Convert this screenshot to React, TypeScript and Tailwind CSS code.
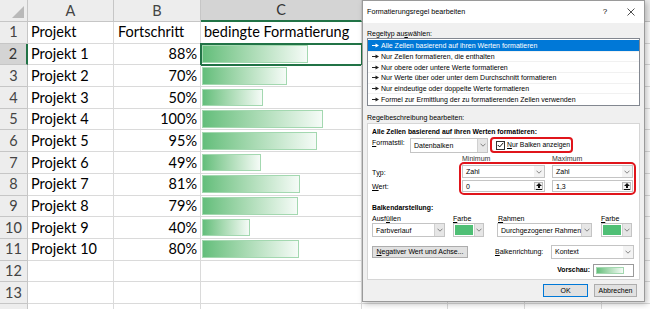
import React from "react";

const projects: [string, number][] = [
  ["Projekt 1", 88],
  ["Projekt 2", 70],
  ["Projekt 3", 50],
  ["Projekt 4", 100],
  ["Projekt 5", 95],
  ["Projekt 6", 49],
  ["Projekt 7", 81],
  ["Projekt 8", 79],
  ["Projekt 9", 40],
  ["Projekt 10", 80],
];

const ruleTypes = [
  "Alle Zellen basierend auf ihren Werten formatieren",
  "Nur Zellen formatieren, die enthalten",
  "Nur obere oder untere Werte formatieren",
  "Nur Werte über oder unter dem Durchschnitt formatieren",
  "Nur eindeutige oder doppelte Werte formatieren",
  "Formel zur Ermittlung der zu formatierenden Zellen verwenden",
];

// px per percent in column C (100% -> 121px)
const BAR_SCALE = 1.21;

function RowHead({ n, active }: { n?: number; active?: boolean }) {
  return (
    <div
      className={
        active
          ? "w-[28px] shrink-0 flex items-center justify-center bg-[#d4d4d4] text-[#333] border-b border-[#c6c6c6] border-r-2 border-r-[#217346]"
          : "w-[28px] shrink-0 flex items-center justify-center bg-[#ededed] text-[#444] border-b border-r border-[#c6c6c6]"
      }
    >
      {n}
    </div>
  );
}

function Sheet() {
  const empty = [12, 13, 0];
  return (
    <div className="w-[650px] h-[309px] overflow-hidden bg-white font-['Lato',sans-serif] text-[14.5px] text-black">
      {/* column headers */}
      <div className="flex h-[22px]">
        <div className="w-[28px] shrink-0 bg-[#ededed] border-r border-b border-[#c6c6c6] flex items-end justify-end p-[3px]">
          <svg width="12" height="12" viewBox="0 0 12 12">
            <polygon points="12,0 12,12 0,12" fill="#b9b9b9" />
          </svg>
        </div>
        <div className="w-[86px] shrink-0 bg-[#ededed] border-r border-b border-[#c6c6c6] flex items-center justify-center text-[#444]">A</div>
        <div className="w-[87px] shrink-0 bg-[#ededed] border-r border-b border-[#c6c6c6] flex items-center justify-center text-[#444]">B</div>
        <div className="w-[161px] shrink-0 bg-[#d4d4d4] border-r border-[#c6c6c6] border-b-2 border-b-[#217346] flex items-center justify-center text-[#333]">C</div>
        <div className="w-[86px] shrink-0 bg-[#ededed] border-r border-b border-[#c6c6c6]" />
        <div className="w-[77px] shrink-0 bg-[#ededed] border-r border-b border-[#c6c6c6]" />
        <div className="w-[77px] shrink-0 bg-[#ededed] border-r border-b border-[#c6c6c6]" />
        <div className="flex-1 bg-[#ededed] border-b border-[#c6c6c6]" />
      </div>

      {/* row 1 */}
      <div className="flex h-[21.7px]">
        <RowHead n={1} />
        <div className="w-[86px] shrink-0 border-r border-b border-[#dadada] flex items-center pl-[3px]">Projekt</div>
        <div className="w-[87px] shrink-0 border-r border-b border-[#dadada] flex items-center pl-[4px]">Fortschritt</div>
        <div className="w-[161px] shrink-0 border-r border-b border-[#dadada] flex items-center pl-[3px] whitespace-nowrap">bedingte Formatierung</div>
        <div className="flex-1 border-b border-[#dadada]" />
      </div>

      {projects.map(([name, pct], i) => (
        <div key={name} className="flex h-[21.7px]">
          <RowHead n={i + 2} active={i === 0} />
          <div className="w-[86px] shrink-0 border-r border-b border-[#dadada] flex items-center pl-[3px]">{name}</div>
          <div className="w-[87px] shrink-0 border-r border-b border-[#dadada] flex items-center justify-end pr-[3px]">{pct}%</div>
          <div
            className={
              i === 0
                ? "w-[161px] shrink-0 border-r border-b border-[#dadada] py-[1.5px] pl-[1px] outline-2 outline-[#217346] -outline-offset-1"
                : "w-[161px] shrink-0 border-r border-b border-[#dadada] py-[1.5px] pl-[1px]"
            }
          >
            <div
              className="h-full border border-[#a3d8b0] bg-gradient-to-r from-[#63be7b] to-[#f5fbf7]"
              style={{ width: pct * BAR_SCALE }}
            />
          </div>
          <div className="flex-1 border-b border-[#dadada]" />
        </div>
      ))}

      {empty.map((n) => (
        <div key={n} className="flex h-[21.7px]">
          <RowHead n={n || undefined} />
          <div className="w-[86px] shrink-0 border-r border-b border-[#dadada]" />
          <div className="w-[87px] shrink-0 border-r border-b border-[#dadada]" />
          <div className="w-[161px] shrink-0 border-r border-b border-[#dadada]" />
          <div className="w-[86px] shrink-0 border-r border-b border-[#dadada]" />
          <div className="w-[77px] shrink-0 border-r border-b border-[#dadada]" />
          <div className="w-[77px] shrink-0 border-r border-b border-[#dadada]" />
          <div className="flex-1 border-b border-[#dadada]" />
        </div>
      ))}
    </div>
  );
}

function Chevron() {
  return (
    <svg width="6" height="4" viewBox="0 0 6 4">
      <path d="M0.5 0.7 L3 3.2 L5.5 0.7" fill="none" stroke="#6a6a6a" strokeWidth="0.8" />
    </svg>
  );
}

function ItemArrow({ light }: { light?: boolean }) {
  const c = light ? "#ffffff" : "#222222";
  return (
    <svg width="7" height="5" viewBox="0 0 7 5" className="shrink-0">
      <rect x="0" y="2" width="4" height="1" fill={c} />
      <polygon points="3.5,0.5 7,2.5 3.5,4.5" fill={c} />
    </svg>
  );
}

function UploadIcon() {
  return (
    <svg width="6" height="7" viewBox="0 0 6 7">
      <polygon points="3,0 6,3 4,3 4,5 2,5 2,3 0,3" fill="#111" />
      <rect x="0" y="6" width="6" height="1" fill="#111" />
    </svg>
  );
}

function Select({ text, className, gray }: { text: string; className: string; gray?: boolean }) {
  return (
    <div className={"flex items-stretch bg-white border border-[#c4c4c4] " + className}>
      <div className="flex-1 flex items-center pl-[3px] whitespace-nowrap overflow-hidden">{text}</div>
      <div
        className={
          gray
            ? "w-[10px] flex items-center justify-center bg-[#e6e6e6] border-l border-[#d0d0d0]"
            : "w-[10px] flex items-center justify-center bg-[#f3f3f3]"
        }
      >
        <Chevron />
      </div>
    </div>
  );
}

function ColorPick({ className }: { className: string }) {
  return (
    <div className={"flex items-stretch bg-white border border-[#c4c4c4] " + className}>
      <div className="flex-1 p-[1px]">
        <div className="h-full bg-[#4fbf75]" />
      </div>
      <div className="w-[9px] flex items-center justify-center bg-[#e6e6e6] border-l border-[#d0d0d0]">
        <Chevron />
      </div>
    </div>
  );
}

function ValueInput({ text, className }: { text: string; className: string }) {
  return (
    <div className={"flex items-stretch bg-white border border-[#c4c4c4] " + className}>
      <div className="flex-1 flex items-center pl-[3px]">{text}</div>
      <div className="w-[9px] my-[1px] mr-[1px] flex items-center justify-center bg-[#f0f0f0] border border-[#bcbcbc]">
        <UploadIcon />
      </div>
    </div>
  );
}

function Dialog() {
  return (
    <div className="absolute left-[362px] top-0 w-[283px] h-[302px] bg-[#f0f0f0] border border-[#9a9a9a] shadow-[2px_2px_6px_rgba(0,0,0,0.25)] font-['Liberation_Sans',Arial,sans-serif] text-[7px] leading-none text-black flex flex-col">
      {/* title bar */}
      <div className="h-[22px] shrink-0 bg-white flex items-center pl-[4px] pr-[9px] text-[7.2px]">
        <span className="flex-1">Formatierungsregel bearbeiten</span>
        <span className="w-[10px] text-center text-[8px]">?</span>
        <svg width="8" height="8" viewBox="0 0 8 8" className="ml-[17px]">
          <path d="M0.5 0.5 L7.5 7.5 M7.5 0.5 L0.5 7.5" stroke="#222" strokeWidth="0.8" />
        </svg>
      </div>

      <div className="px-[4px] flex flex-col">
        <div className="h-[15px] flex items-end pb-[1px]">
          Regeltyp au<span className="underline">s</span>wählen:
        </div>
        <div className="h-[68px] bg-white border border-[#828790] flex flex-col py-[1px]">
          {ruleTypes.map((t, i) => (
            <div
              key={t}
              className={
                i === 0
                  ? "h-[11px] flex items-center gap-[2px] pl-[4px] bg-[#0078d7] text-white"
                  : "h-[11px] flex items-center gap-[2px] pl-[4px] border-t border-[#f1f1f1]"
              }
            >
              <ItemArrow light={i === 0} />
              <span className="whitespace-nowrap">{t}</span>
            </div>
          ))}
        </div>
        <div className="h-[17px] flex items-end pb-[2px]">
          Regelbeschreibung bearbeiten:
        </div>

        {/* description group */}
        <div className="bg-white border border-[#d6d6d6] pl-[4px] flex flex-col">
          <div className="h-[9px] mt-[4px] font-bold text-[6.8px] flex items-center">
            Alle Zellen basierend auf ihren Werten formatieren:
          </div>
          <div className="h-[16px] flex items-center">
            <div className="w-[38px] self-start pt-[2px]">
              <span className="underline">F</span>ormatstil:
            </div>
            <Select text="Datenbalken" className="w-[78px] h-[15px]" gray />
            <div className="ml-[2px] w-[83px] h-[16px] rounded-[4px] border-2 border-[#e0151b] flex items-center pl-[4px] gap-[2px] text-[6.8px]">
              <div className="w-[9px] h-[9px] shrink-0 border border-[#333] bg-white flex items-center justify-center">
                <svg width="7" height="6" viewBox="0 0 7 6">
                  <path d="M0.8 3 L2.7 4.9 L6.3 0.8" fill="none" stroke="#111" strokeWidth="1" />
                </svg>
              </div>
              <span className="whitespace-nowrap">
                <span className="underline">N</span>ur Balken anzeigen
              </span>
            </div>
          </div>
          <div className="h-[8px] mt-[1px] flex items-center text-[#333]">
            <span className="w-[90px]" />
            <span className="w-[90px]">Minimum</span>
            <span>Maximum</span>
          </div>
          <div className="h-[33px] flex">
            <div className="w-[87px] flex flex-col pt-[5px] gap-[4px]">
              <div className="h-[10px] flex items-center">
                T<span className="underline">y</span>p:
              </div>
              <div className="h-[10px] flex items-center">
                <span className="underline">W</span>ert:
              </div>
            </div>
            <div className="w-[177px] rounded-[5px] border-2 border-[#e0151b] p-[1px] flex flex-col gap-[2px]">
              <div className="h-[13px] flex gap-[7px]">
                <Select text="Zahl" className="w-[83px] h-[13px]" />
                <Select text="Zahl" className="w-[81px] h-[13px]" />
              </div>
              <div className="h-[12px] flex gap-[7px]">
                <ValueInput text="0" className="w-[83px] h-[12px]" />
                <ValueInput text="1,3" className="w-[81px] h-[12px]" />
              </div>
            </div>
          </div>

          <div className="h-[10px] mt-[8px] font-bold text-[6.8px] flex items-center">Balkendarstellung:</div>
          <div className="h-[10px] flex items-center">
            <span className="w-[81px]">
              Ausf<span className="underline">ü</span>llen
            </span>
            <span className="w-[45px]">
              <span className="underline">F</span>arbe
            </span>
            <span className="w-[103px]">
              <span className="underline">R</span>ahmen
            </span>
            <span>
              <span className="underline">F</span>arbe
            </span>
          </div>
          <div className="h-[14px] flex">
            <Select text="Farbverlauf" className="w-[73px] h-[14px]" gray />
            <ColorPick className="ml-[8px] w-[31px] h-[14px]" />
            <Select text="Durchgezogener Rahmen" className="ml-[13px] w-[95px] h-[14px]" gray />
            <ColorPick className="ml-[9px] w-[31px] h-[14px]" />
          </div>

          <div className="h-[15px] mt-[7px] flex items-center">
            <div className="w-[96px] h-[12px] bg-[#e1e1e1] border border-[#adadad] flex items-center justify-center whitespace-nowrap">
              <span className="underline">N</span>egativer Wert und Achse...
            </div>
            <div className="ml-[27px] w-[56px]">
              <span className="underline">B</span>alkenrichtung:
            </div>
            <Select text="Kontext" className="w-[83px] h-[14px]" />
          </div>

          <div className="h-[13px] mt-[5px] mb-[2px] flex items-center justify-end pr-[5px] gap-[3px]">
            <span className="font-bold text-[6.8px]">Vorschau:</span>
            <div className="w-[41px] h-[13px] bg-white border border-[#9a9a9a] flex items-center pl-[2px]">
              <div className="w-[28px] h-[7px] border border-[#a3d8b0] bg-gradient-to-r from-[#63be7b] to-[#f5fbf7]" />
            </div>
          </div>
        </div>

        <div className="mt-[4px] h-[13px] flex justify-end pr-[3px] gap-[6px]">
          <div className="w-[45px] h-[13px] bg-[#e1e1e1] border border-[#0078d7] flex items-center justify-center">OK</div>
          <div className="w-[43px] h-[13px] bg-[#e1e1e1] border border-[#adadad] flex items-center justify-center">Abbrechen</div>
        </div>
      </div>
    </div>
  );
}

export default function App() {
  return (
    <div className="relative w-[650px] h-[309px] overflow-hidden">
      <Sheet />
      <Dialog />
    </div>
  );
}
